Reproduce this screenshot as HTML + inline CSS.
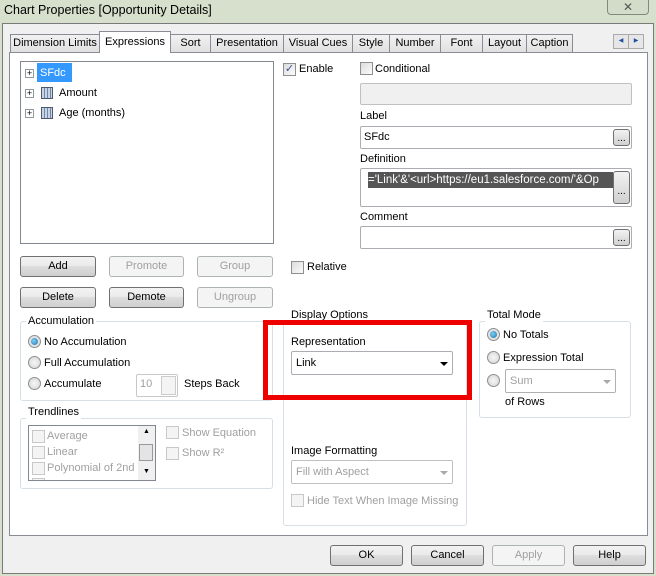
<!DOCTYPE html>
<html><head><style>
*{box-sizing:border-box}
body{margin:0;width:656px;height:576px;overflow:hidden;background:#d6e0cc;font-family:"Liberation Sans",sans-serif;font-size:11px;color:#000;position:relative}
.a{position:absolute}
.t{position:absolute;white-space:nowrap;line-height:14px}
.dis{color:#a0a0a0}
.btn{position:absolute;height:21px;border:1px solid #707070;border-radius:3px;background:linear-gradient(#f2f2f2,#ebebeb 45%,#dddddd 50%,#cfcfcf);text-align:center;line-height:19px;font-size:11px}
.btn.d{border-color:#adb2b5;background:#f4f4f4;color:#a0a0a0}
.box{position:absolute;border:1px solid #abadb3;background:#fff;border-radius:2px}
.cb{position:absolute;width:13px;height:13px;border:1px solid #8e8f8f;background:linear-gradient(135deg,#dcdcdc,#fbfbfb)}
.cb.d{border-color:#c8c8c8;background:#f4f4f4}
.rb{position:absolute;width:13px;height:13px;border-radius:50%;border:1px solid #8e8f8f;background:radial-gradient(#f6f6f6,#d4d4d4)}
.rb.on::after{content:"";position:absolute;left:2px;top:2px;width:7px;height:7px;border-radius:50%;background:radial-gradient(circle at 40% 40%,#7fd0f5,#1a6fa8)}
.grp{position:absolute;border:1px solid #d5dfe5;border-radius:3px}
.gt{position:absolute;background:#fff;padding:0 2px;line-height:14px;white-space:nowrap}
.tab{position:absolute;top:34px;height:18px;border:1px solid #898c95;border-bottom:none;background:linear-gradient(#f2f2f2,#e0e0e0);text-align:center;line-height:16px;white-space:nowrap;overflow:hidden}
.dots{position:absolute;width:17px;height:17px;border:1px solid #707070;border-radius:3px;background:linear-gradient(#f2f2f2,#d0d0d0);font-size:10px;text-align:center;line-height:18px}
.arrow{position:absolute;width:0;height:0;border-left:4px solid transparent;border-right:4px solid transparent;border-top:4px solid #000}
.pm{position:absolute;width:9px;height:9px;border:1px solid #919b9c;background:#fff;font-size:9px;line-height:7px;text-align:center}
.grid{position:absolute;width:12px;height:12px;border:1px solid #4a5a70;background:repeating-linear-gradient(90deg,#c8d4e4 0 2px,#7088a8 2px 3px),#fff}
</style></head><body>
<div class="t" style="left:4px;top:3px;font-size:12.5px">Chart Properties [Opportunity Details]</div>
<div class="a" style="left:607px;top:-3px;width:42px;height:18px;border:1px solid #7f8a7a;border-radius:4px;background:#d3dcc9;text-align:center;font-size:12px;line-height:18px;color:#555">✕</div>
<div class="a" style="left:2px;top:23px;width:652px;height:551px;background:#f0f0f0;border:1px solid #7a7a7a"></div>

<div class="tab" style="left:10px;width:90px">Dimension Limits</div>
<div class="tab" style="left:170px;width:41px">Sort</div>
<div class="tab" style="left:210px;width:74px">Presentation</div>
<div class="tab" style="left:283px;width:70px">Visual Cues</div>
<div class="tab" style="left:352px;width:38px">Style</div>
<div class="tab" style="left:389px;width:52px">Number</div>
<div class="tab" style="left:440px;width:43px">Font</div>
<div class="tab" style="left:482px;width:45px">Layout</div>
<div class="tab" style="left:526px;width:47px">Caption</div>
<div class="a" style="left:613px;top:34px;width:16px;height:15px;border:1px solid #aaa;background:#e6e6e6;font-size:6px;text-align:center;line-height:13px;color:#2050a0">◀</div>
<div class="a" style="left:628px;top:34px;width:16px;height:15px;border:1px solid #aaa;background:#e6e6e6;font-size:6px;text-align:center;line-height:13px;color:#2050a0">▶</div>
<div class="a" style="left:9px;top:52px;width:639px;height:484px;background:#fff;border:1px solid #898c95"></div>
<div class="tab" style="left:99px;top:31px;width:72px;height:22px;background:#fff;line-height:20px">Expressions</div>

<div class="a" style="left:20px;top:61px;width:254px;height:183px;border:1px solid #828790;background:#fff"></div>
<div class="pm" style="left:25px;top:69px">+</div>
<div class="a" style="left:37px;top:63px;width:35px;height:19px;background:#3399ff"></div>
<div class="t" style="left:40px;top:66px;color:#fff">SFdc</div>
<div class="pm" style="left:25px;top:89px">+</div><div class="grid" style="left:41px;top:87px"></div>
<div class="t" style="left:59px;top:86px">Amount</div>
<div class="pm" style="left:25px;top:109px">+</div><div class="grid" style="left:41px;top:107px"></div>
<div class="t" style="left:59px;top:106px">Age (months)</div>

<div class="cb" style="left:283px;top:63px;font-size:11px;line-height:11px;text-align:center;color:#3a4f9a">✓</div>
<div class="t" style="left:299px;top:62px">Enable</div>
<div class="cb" style="left:360px;top:62px"></div>
<div class="t" style="left:375px;top:62px">Conditional</div>
<div class="box" style="left:360px;top:83px;width:272px;height:22px;background:#f0f0f0;border-color:#c0c0c0"></div>
<div class="t" style="left:360px;top:109px">Label</div>
<div class="box" style="left:360px;top:126px;width:272px;height:23px"></div>
<div class="t" style="left:364px;top:130px">SFdc</div>
<div class="dots" style="left:613px;top:129px">...</div>
<div class="t" style="left:360px;top:152px">Definition</div>
<div class="box" style="left:360px;top:168px;width:272px;height:39px"></div>
<div class="a" style="left:368px;top:172px;width:245px;height:16px;background:#555"></div>
<div class="t" style="left:368px;top:173px;color:#fff;width:245px;overflow:hidden;font-size:11.5px">='Link'&amp;'&lt;url&gt;https://eu1.salesforce.com/'&amp;Op</div>
<div class="dots" style="left:613px;top:171px;height:33px;line-height:40px">...</div>
<div class="t" style="left:360px;top:210px">Comment</div>
<div class="box" style="left:360px;top:226px;width:272px;height:23px"></div>
<div class="dots" style="left:613px;top:229px">...</div>
<div class="cb" style="left:291px;top:261px"></div>
<div class="t" style="left:307px;top:260px">Relative</div>

<div class="btn" style="left:20px;top:256px;width:76px">Add</div>
<div class="btn d" style="left:109px;top:256px;width:75px">Promote</div>
<div class="btn d" style="left:197px;top:256px;width:76px">Group</div>
<div class="btn" style="left:20px;top:287px;width:76px">Delete</div>
<div class="btn" style="left:109px;top:287px;width:75px">Demote</div>
<div class="btn d" style="left:197px;top:287px;width:76px">Ungroup</div>

<div class="grp" style="left:20px;top:321px;width:253px;height:80px"></div>
<div class="gt" style="left:26px;top:314px">Accumulation</div>
<div class="rb on" style="left:28px;top:335px"></div><div class="t" style="left:44px;top:335px">No Accumulation</div>
<div class="rb" style="left:28px;top:356px"></div><div class="t" style="left:44px;top:356px">Full Accumulation</div>
<div class="rb" style="left:28px;top:377px"></div><div class="t" style="left:44px;top:377px">Accumulate</div>
<div class="box" style="left:136px;top:374px;width:42px;height:23px;border-color:#c8c8c8"></div>
<div class="t dis" style="left:140px;top:377px">10</div>
<div class="a" style="left:161px;top:376px;width:15px;height:19px;border:1px solid #ccc;background:#f4f4f4"></div>
<div class="t" style="left:184px;top:377px">Steps Back</div>

<div class="grp" style="left:20px;top:418px;width:253px;height:71px"></div>
<div class="gt" style="left:26px;top:405px">Trendlines</div>
<div class="a" style="left:28px;top:425px;width:128px;height:56px;border:1px solid #828790;overflow:hidden">
 <div class="cb d" style="left:3px;top:4px"></div><div class="t dis" style="left:18px;top:3px">Average</div>
 <div class="cb d" style="left:3px;top:20px"></div><div class="t dis" style="left:18px;top:19px">Linear</div>
 <div class="cb d" style="left:3px;top:36px"></div><div class="t dis" style="left:18px;top:35px">Polynomial of 2nd d</div>
 <div class="cb d" style="left:3px;top:52px"></div>
 <div class="a" style="left:109px;top:0;width:17px;height:54px;background:#f0f0f0;font-size:7px;text-align:center;line-height:12px">▲<div class="a" style="left:1px;top:18px;width:14px;height:17px;border:1px solid #999;background:#e4e4e4"></div><div class="a" style="left:0;top:40px;width:17px">▼</div></div>
</div>
<div class="cb d" style="left:166px;top:426px"></div><div class="t dis" style="left:182px;top:426px">Show Equation</div>
<div class="cb d" style="left:166px;top:447px"></div><div class="t dis" style="left:182px;top:446px">Show R²</div>

<div class="grp" style="left:283px;top:321px;width:184px;height:205px"></div>
<div class="gt" style="left:289px;top:308px">Display Options</div>
<div class="t" style="left:291px;top:335px">Representation</div>
<div class="box" style="left:291px;top:351px;width:162px;height:24px"></div>
<div class="t" style="left:296px;top:356px">Link</div>
<div class="arrow" style="left:440px;top:362px"></div>
<div class="a" style="left:263px;top:320px;width:209px;height:80px;border:5px solid #ee0000"></div>
<div class="t" style="left:291px;top:444px">Image Formatting</div>
<div class="box" style="left:291px;top:460px;width:162px;height:24px;border-color:#c0c0c0"></div>
<div class="t dis" style="left:296px;top:465px">Fill with Aspect</div>
<div class="arrow" style="left:440px;top:471px;border-top-color:#aaa"></div>
<div class="cb d" style="left:291px;top:494px"></div><div class="t dis" style="left:307px;top:494px">Hide Text When Image Missing</div>

<div class="grp" style="left:479px;top:321px;width:152px;height:97px"></div>
<div class="gt" style="left:485px;top:308px">Total Mode</div>
<div class="rb on" style="left:487px;top:328px"></div><div class="t" style="left:503px;top:328px">No Totals</div>
<div class="rb" style="left:487px;top:351px"></div><div class="t" style="left:503px;top:351px">Expression Total</div>
<div class="rb" style="left:487px;top:374px"></div>
<div class="box" style="left:505px;top:369px;width:111px;height:24px;border-color:#b0b0b0"></div>
<div class="t dis" style="left:510px;top:374px">Sum</div>
<div class="arrow" style="left:603px;top:380px;border-top-color:#aaa"></div>
<div class="t" style="left:505px;top:395px">of Rows</div>

<div class="btn" style="left:330px;top:545px;width:73px">OK</div>
<div class="btn" style="left:411px;top:545px;width:73px">Cancel</div>
<div class="btn d" style="left:492px;top:545px;width:73px">Apply</div>
<div class="btn" style="left:573px;top:545px;width:73px">Help</div>
</body></html>
